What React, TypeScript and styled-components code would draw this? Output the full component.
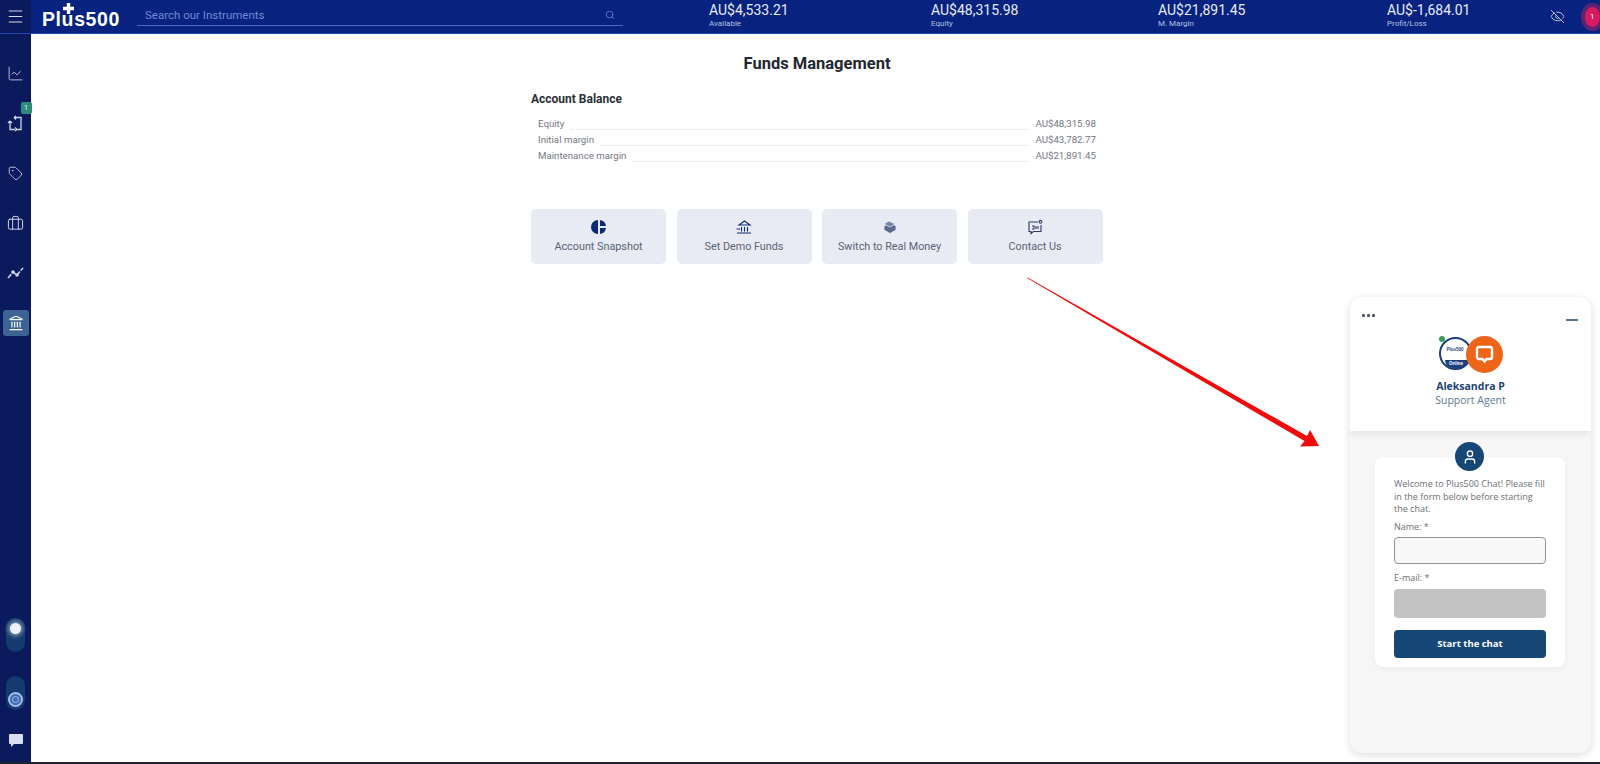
import React from 'react';
import styled, { createGlobalStyle } from 'styled-components';
import { Menu, Search, EyeOff, ChartLine, Tag, Briefcase, Landmark, User, MessageSquareText } from 'lucide-react';

const GlobalStyle = createGlobalStyle`
  html, body {
    margin: 0;
    padding: 0;
    height: 100%;
    overflow: hidden;
    background: #fff;
    font-family: Roboto, "Liberation Sans", sans-serif;
  }
  #root { height: 100%; }
`;

const Page = styled.div`
  position: relative;
  width: 1600px;
  height: 764px;
  display: flex;
  flex-direction: column;
  overflow: hidden;
  border-bottom: 2px solid #1c2233;
  box-sizing: border-box;
`;

const TopBar = styled.header`
  height: 34px;
  flex: none;
  display: flex;
  align-items: stretch;
  background: #08237f;
  border-bottom: 1px solid #1c47a8;
  box-sizing: border-box;
  color: #fff;
`;

const BurgerCell = styled.div`
  width: 31px;
  flex: none;
  display: flex;
  align-items: center;
  justify-content: center;
  background: #0a1a5c;
  color: #d5daeb;
`;

const Logo = styled.div`
  position: relative;
  width: 93px;
  margin-left: 11px;
  flex: none;
  font-family: "Liberation Sans", sans-serif;
  font-weight: 700;
  font-size: 19.5px;
  line-height: 34px;
  padding-top: 2px;
  letter-spacing: 0.6px;
  box-sizing: border-box;
  white-space: nowrap;
  color: #fff;
`;

const LogoPlus = styled.svg`
  position: absolute;
  left: 21px;
  top: 3px;
`;

const SearchBox = styled.div`
  width: 486px;
  height: 26px;
  margin-left: 2px;
  flex: none;
  display: flex;
  align-items: center;
  justify-content: space-between;
  padding: 4px 8px 0 8px;
  border-bottom: 1px solid #4b6ccf;
  box-sizing: border-box;
  font-size: 11.5px;
  color: #6d8ad6;
`;

const Stats = styled.div`
  display: flex;
  margin-left: 86px;
`;

const Stat = styled.div<{ $w: number }>`
  width: ${(p) => p.$w}px;
  padding-top: 3px;
`;

const StatValue = styled.div`
  font-size: 14px;
  line-height: 15px;
  color: #e6eaf6;
`;

const StatLabel = styled.div`
  font-size: 8px;
  line-height: 10px;
  margin-top: 1px;
  color: #b4c0e4;
`;

const EyeCell = styled.div`
  width: 20px;
  display: flex;
  align-items: center;
  color: #cfd6ec;
  margin-right: 15px;
  margin-left: -14px;
`;

const Alert = styled.div`
  width: 20px;
  height: 20px;
  align-self: center;
  border-radius: 50%;
  background: #d81b60;
  box-shadow: 0 0 0 4px #5c2370;
  font-size: 8px;
  line-height: 20px;
  text-align: center;
  color: #fff;
  margin-left: 4px;
`;

const Body = styled.div`
  flex: 1;
  display: flex;
  min-height: 0;
`;

const SideBar = styled.nav`
  width: 31px;
  flex: none;
  display: flex;
  flex-direction: column;
  align-items: center;
  padding-top: 26px;
  background: #0a1a5c;
  color: #cdd5ea;
`;

const SideItem = styled.div<{ $active?: boolean }>`
  position: relative;
  width: 26px;
  height: 26px;
  margin-bottom: 24px;
  display: flex;
  align-items: center;
  justify-content: center;
  border-radius: 3px;
  background: ${(p) => (p.$active ? '#3d6393' : 'transparent')};
  color: ${(p) => (p.$active ? '#fff' : '#cdd5ea')};
`;

const Badge = styled.span`
  position: absolute;
  top: -8px;
  right: -3px;
  width: 11px;
  height: 12px;
  border-radius: 2px;
  background: #2c8c7c;
  font-size: 7px;
  line-height: 12px;
  text-align: center;
  color: #dff;
`;

const Toggle = styled.div<{ $bottom?: boolean }>`
  width: 19px;
  height: 34px;
  margin-top: ${(p) => (p.$bottom ? '24px' : 'auto')};
  border-radius: 10px;
  background: #153a6e;
  display: flex;
  flex-direction: column;
  align-items: center;
  justify-content: ${(p) => (p.$bottom ? 'flex-end' : 'flex-start')};
`;

const Sun = styled.div`
  width: 11px;
  height: 11px;
  margin-top: 5px;
  border-radius: 50%;
  background: #eef1f8;
  box-shadow: 0 0 4px 2px rgba(230, 235, 250, 0.55);
`;

const Target = styled.div`
  width: 15px;
  height: 15px;
  margin-bottom: 3px;
  border-radius: 50%;
  background: #3d6db5;
  border: 2px solid #a4bce4;
  box-sizing: border-box;
  display: flex;
  align-items: center;
  justify-content: center;
  &::after {
    content: '';
    width: 5px;
    height: 5px;
    border: 1px solid #a4bce4;
    border-radius: 50%;
  }
`;

const ChatNote = styled.div`
  margin: 24px 0 18px;
  width: 14px;
  height: 10px;
  border-radius: 1px;
  background: #d8deef;
  position: relative;
  &::after {
    content: '';
    position: absolute;
    left: 2px;
    bottom: -3px;
    border-left: 3px solid #d8deef;
    border-bottom: 3px solid transparent;
  }
`;

const Main = styled.main`
  flex: 1;
  display: flex;
  flex-direction: column;
  align-items: center;
  padding: 20px 0 0 3px;
  background: #fff;
`;

const Title = styled.h1`
  margin: 0;
  font-size: 16.5px;
  line-height: 20px;
  font-weight: 700;
  color: #222831;
`;

const Panel = styled.section`
  width: 572px;
  margin-top: 17px;
`;

const SectionTitle = styled.h2`
  margin: 0;
  font-size: 12px;
  line-height: 16px;
  font-weight: 700;
  color: #2c2f36;
`;

const Rows = styled.div`
  margin-top: 9px;
  padding: 0 7px;
`;

const Row = styled.div`
  display: flex;
  align-items: flex-end;
  height: 16px;
  font-size: 9.7px;
  line-height: 16px;
  color: #74777f;
`;

const Leader = styled.span`
  flex: 1;
  margin: 0 6px 2px;
  border-bottom: 1px dotted #dcdee3;
`;

const Actions = styled.div`
  display: grid;
  grid-template-columns: repeat(4, 135px);
  column-gap: 10.5px;
  margin-top: 45px;
`;

const ActionCard = styled.div`
  height: 55px;
  display: flex;
  flex-direction: column;
  align-items: center;
  justify-content: flex-start;
  padding-top: 10px;
  box-sizing: border-box;
  border-radius: 5px;
  background: #e8ebf3;
  font-size: 10.8px;
  color: #5a6277;
`;

const ActionIcon = styled.div`
  height: 16px;
  margin-bottom: 5px;
  color: #0c2a78;
`;

const Arrow = styled.svg`
  position: absolute;
  left: 1020px;
  top: 270px;
`;

const ChatWidget = styled.aside`
  position: absolute;
  left: 1350px;
  top: 297px;
  width: 241px;
  height: 456px;
  display: flex;
  flex-direction: column;
  border-radius: 12px;
  background: #f6f6f7;
  box-shadow: 0 2px 8px rgba(0, 0, 0, 0.14);
  font-family: "Open Sans", sans-serif;
  overflow: hidden;
`;

const ChatHeader = styled.div`
  position: relative;
  height: 134px;
  flex: none;
  display: flex;
  flex-direction: column;
  align-items: center;
  padding-top: 39px;
  box-sizing: border-box;
  background: #fff;
  box-shadow: 0 3px 7px rgba(0, 0, 0, 0.08);
`;

const Dots = styled.div`
  position: absolute;
  left: 12px;
  top: 17px;
  display: flex;
  gap: 2.5px;
  span {
    width: 2.5px;
    height: 2.5px;
    border-radius: 50%;
    background: #4a5360;
  }
`;

const Minimize = styled.div`
  position: absolute;
  right: 13px;
  top: 22px;
  width: 12px;
  height: 2px;
  background: #5c7290;
`;

const AvatarGroup = styled.div`
  position: relative;
  width: 64px;
  height: 38px;
`;

const CompanyAvatar = styled.div`
  position: absolute;
  left: 0;
  top: 1px;
  width: 33px;
  height: 33px;
  border-radius: 50%;
  border: 2px solid #1d3f7c;
  box-sizing: border-box;
  background: #fff;
  font-family: "Liberation Sans", sans-serif;
  font-size: 4.5px;
  font-weight: 700;
  text-align: center;
  line-height: 9px;
  padding-top: 6px;
  color: #1d3f7c;
`;

const CompanyBand = styled.div`
  position: absolute;
  left: 4px;
  right: 2px;
  bottom: 0;
  height: 8px;
  border-radius: 0 0 10px 10px;
  background: #1d3f7c;
  color: #fff;
  line-height: 8px;
`;

const OnlineDot = styled.span`
  position: absolute;
  left: 0;
  top: 0;
  width: 6px;
  height: 6px;
  border-radius: 50%;
  background: #3d9a5b;
`;

const ChatBubble = styled.div`
  position: absolute;
  left: 27px;
  top: 0;
  width: 37px;
  height: 37px;
  border-radius: 50%;
  background: #ee6419;
  display: flex;
  align-items: center;
  justify-content: center;
`;

const AgentName = styled.div`
  margin-top: 5px;
  font-size: 10.5px;
  line-height: 14px;
  font-weight: 700;
  color: #1d4576;
`;

const AgentRole = styled.div`
  font-size: 10.5px;
  line-height: 15px;
  color: #5d7a99;
`;

const FormCard = styled.form`
  position: relative;
  width: 190px;
  height: 210px;
  margin: 26px 0 0 25px;
  padding: 21px 19px 0;
  box-sizing: border-box;
  border-radius: 8px;
  background: #fff;
  box-shadow: 0 2px 6px rgba(0, 0, 0, 0.04);
  font-size: 9px;
  line-height: 12.5px;
  color: #6d6f73;
`;

const UserCircle = styled.div`
  position: absolute;
  left: 80px;
  top: -15px;
  width: 29px;
  height: 29px;
  border-radius: 50%;
  background: #164777;
  color: #fff;
  display: flex;
  align-items: center;
  justify-content: center;
`;

const Intro = styled.p`
  margin: 0 0 5px;
`;

const FieldLabel = styled.label`
  display: block;
  margin-bottom: 4px;
`;

const NameInput = styled.div`
  height: 27px;
  margin-bottom: 8px;
  border: 1px solid #8f9296;
  border-radius: 4px;
  box-sizing: border-box;
  background: #f8f8f8;
`;

const EmailInput = styled.div`
  height: 29px;
  margin-bottom: 12px;
  border-radius: 4px;
  background: #c3c3c3;
`;

const StartButton = styled.div`
  height: 28px;
  border-radius: 4px;
  background: #164777;
  font-size: 9.5px;
  font-weight: 700;
  line-height: 28px;
  text-align: center;
  color: #fff;
`;

const stats = [
  { value: 'AU$4,533.21', label: 'Available', w: 222 },
  { value: 'AU$48,315.98', label: 'Equity', w: 227 },
  { value: 'AU$21,891.45', label: 'M. Margin', w: 229 },
  { value: 'AU$-1,684.01', label: 'Profit/Loss', w: 177 },
];

const balances = [
  { name: 'Equity', amount: 'AU$48,315.98' },
  { name: 'Initial margin', amount: 'AU$43,782.77' },
  { name: 'Maintenance margin', amount: 'AU$21,891.45' },
];

const ExchangeIcon = () => (
  <svg width="17" height="17" viewBox="0 0 17 17" fill="none" stroke="currentColor" strokeWidth="1.3">
    <path d="M7 2.5 H14 V14.5 H10 M10 14.5 L8 12.5 M10 14.5 L8 16" />
    <path d="M8 14.5 H3 V6 M3 6 L1 8 M3 6 L5 8 M7 2.5 L9 1 M7 2.5 L9 4.5" />
  </svg>
);

const ZigzagIcon = () => (
  <svg width="17" height="14" viewBox="0 0 17 14" fill="none" stroke="currentColor" strokeWidth="1.6">
    <path d="M1 12 L6 6 L10 9 L16 2" strokeDasharray="5 1.2" />
    <circle cx="6" cy="6" r="1" fill="currentColor" />
    <circle cx="10" cy="9" r="1" fill="currentColor" />
  </svg>
);

const PieIcon = () => (
  <svg width="16" height="16" viewBox="0 0 16 16" fill="currentColor">
    <path d="M7 1 A7 7 0 0 0 7 15 Z" />
    <path d="M9 1 A7 7 0 0 1 15 7 H9 Z" />
    <path d="M9 9 H15 A7 7 0 0 1 9 15 Z" />
  </svg>
);

const BankDemoIcon = () => (
  <svg width="16" height="16" viewBox="0 0 16 16" fill="none" stroke="currentColor" strokeWidth="1.1">
    <path d="M3 6 L8.5 2 L14 6 Z" />
    <path d="M5.5 8 V12.5 M8.5 8 V12.5 M11.5 8 V12.5 M1 14 H15 M0.5 10 H4" />
  </svg>
);

const StackIcon = () => (
  <svg width="16" height="16" viewBox="0 0 16 16" fill="#5a6a8f" stroke="#e8ebf3" strokeWidth="0.8">
    <path d="M2 7 L8 3.5 L14 7 V11 L8 14.5 L2 11 Z" />
    <path d="M2 5 L7 2 L13 5 L8 8 Z" fill="#7482a3" />
  </svg>
);

const ContactIcon = () => (
  <svg width="16" height="16" viewBox="0 0 16 16" fill="none" stroke="#2c3a66" strokeWidth="1.1">
    <path d="M11 3 H2 V12.5 H4 V14.5 L6.5 12.5 H14 V6" />
    <path d="M5 7 H7 V10 H5 M9 7 V10 M11 7 V10" />
    <circle cx="13.5" cy="2.8" r="1.4" />
  </svg>
);

const App = () => {
  return (
    <Page>
      <GlobalStyle />
      <TopBar>
        <BurgerCell>
          <Menu size={19} strokeWidth={1.4} />
        </BurgerCell>
        <Logo>
          Plus500
          <LogoPlus width="11" height="11" viewBox="0 0 11 11" fill="#fff">
            <path d="M3.8 0 H7.2 V3.8 H11 V7.2 H7.2 V11 H3.8 V7.2 H0 V3.8 H3.8 Z" />
          </LogoPlus>
        </Logo>
        <SearchBox>
          <span>Search our Instruments</span>
          <Search size={10} strokeWidth={1.8} />
        </SearchBox>
        <Stats>
          {stats.map((s) => (
            <Stat key={s.label} $w={s.w}>
              <StatValue>{s.value}</StatValue>
              <StatLabel>{s.label}</StatLabel>
            </Stat>
          ))}
        </Stats>
        <EyeCell>
          <EyeOff size={15} strokeWidth={1.4} />
        </EyeCell>
        <Alert>1</Alert>
      </TopBar>

      <Body>
        <SideBar>
          <SideItem>
            <ChartLine size={17} strokeWidth={1.2} />
          </SideItem>
          <SideItem>
            <Badge>1</Badge>
            <ExchangeIcon />
          </SideItem>
          <SideItem>
            <Tag size={15} strokeWidth={1.4} style={{ transform: 'rotate(0deg)' }} />
          </SideItem>
          <SideItem>
            <Briefcase size={17} strokeWidth={1.4} />
          </SideItem>
          <SideItem>
            <ZigzagIcon />
          </SideItem>
          <SideItem $active>
            <Landmark size={16} strokeWidth={1.8} />
          </SideItem>
          <Toggle>
            <Sun />
          </Toggle>
          <Toggle $bottom>
            <Target />
          </Toggle>
          <ChatNote />
        </SideBar>

        <Main>
          <Title>Funds Management</Title>
          <Panel>
            <SectionTitle>Account Balance</SectionTitle>
            <Rows>
              {balances.map((b) => (
                <Row key={b.name}>
                  <span>{b.name}</span>
                  <Leader />
                  <span>{b.amount}</span>
                </Row>
              ))}
            </Rows>
            <Actions>
              <ActionCard>
                <ActionIcon>
                  <PieIcon />
                </ActionIcon>
                Account Snapshot
              </ActionCard>
              <ActionCard>
                <ActionIcon>
                  <BankDemoIcon />
                </ActionIcon>
                Set Demo Funds
              </ActionCard>
              <ActionCard>
                <ActionIcon>
                  <StackIcon />
                </ActionIcon>
                Switch to Real Money
              </ActionCard>
              <ActionCard>
                <ActionIcon>
                  <ContactIcon />
                </ActionIcon>
                Contact Us
              </ActionCard>
            </Actions>
          </Panel>
        </Main>
      </Body>

      <Arrow width="310" height="190" viewBox="0 0 310 190">
        <path d="M7 8 L7.6 7.4 L287 166 L290 160 L299 176 L280 176.5 L284.5 171 Z" fill="#f00a0a" />
      </Arrow>

      <ChatWidget>
        <ChatHeader>
          <Dots>
            <span />
            <span />
            <span />
          </Dots>
          <Minimize />
          <AvatarGroup>
            <CompanyAvatar>
              Plus500
              <CompanyBand>Online</CompanyBand>
            </CompanyAvatar>
            <OnlineDot />
            <ChatBubble>
              <MessageSquareText size={0} />
              <svg width="21" height="21" viewBox="0 0 21 21" fill="none" stroke="#fff" strokeWidth="2.4">
                <path d="M5 3 H16 A2 2 0 0 1 18 5 V13 A2 2 0 0 1 16 15 H12.5 L10.5 17.5 L8.5 15 H5 A2 2 0 0 1 3 13 V5 A2 2 0 0 1 5 3 Z" />
              </svg>
            </ChatBubble>
          </AvatarGroup>
          <AgentName>Aleksandra P</AgentName>
          <AgentRole>Support Agent</AgentRole>
        </ChatHeader>
        <FormCard>
          <UserCircle>
            <User size={16} strokeWidth={2} />
          </UserCircle>
          <Intro>Welcome to Plus500 Chat! Please fill in the form below before starting the chat.</Intro>
          <FieldLabel>Name: *</FieldLabel>
          <NameInput />
          <FieldLabel>E-mail: *</FieldLabel>
          <EmailInput />
          <StartButton>Start the chat</StartButton>
        </FormCard>
      </ChatWidget>
    </Page>
  );
};

export default App;
